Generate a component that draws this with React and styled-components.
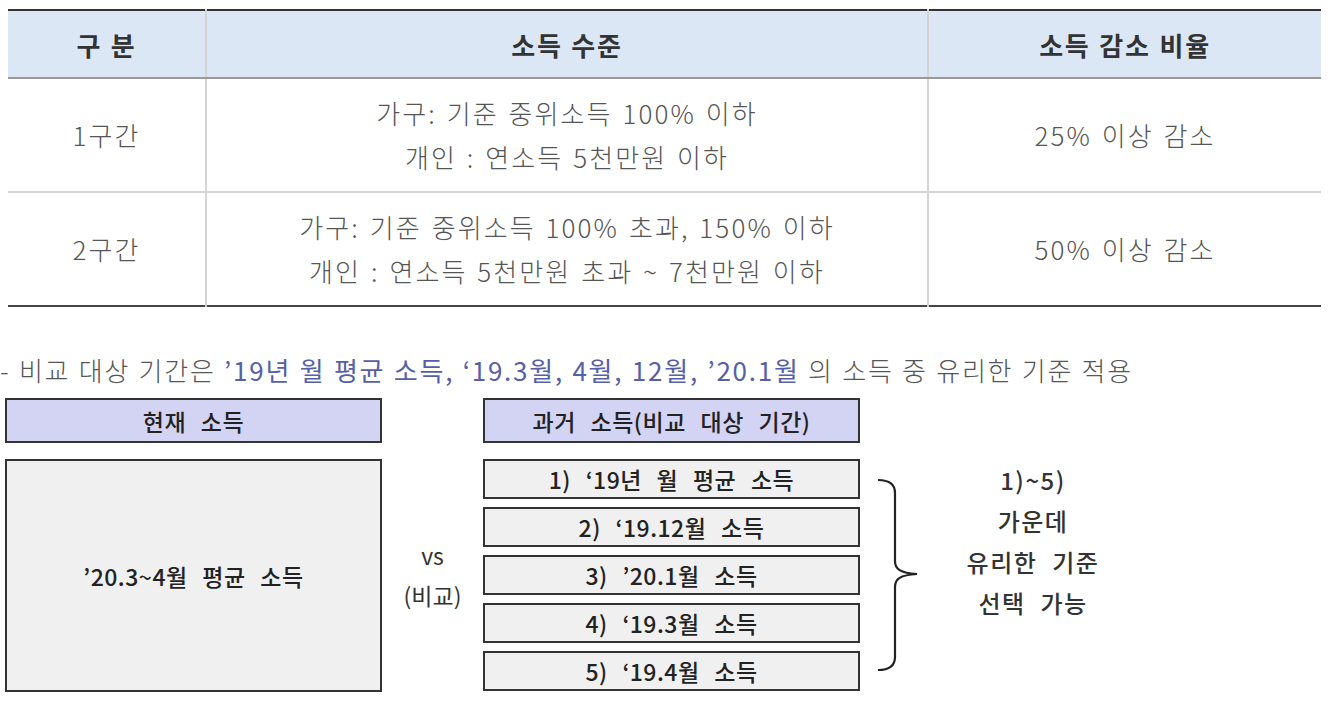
import React from 'react';
import styled, { createGlobalStyle } from 'styled-components';

const GlobalStyle = createGlobalStyle`
  body {
    margin: 0;
    background: #fff;
    font-family: "Noto Sans CJK KR", "Noto Sans", sans-serif;
  }
`;

const Page = styled.div`
  width: 1335px;
  height: 707px;
  overflow: hidden;
  padding-top: 9px;
  box-sizing: border-box;
`;

const Table = styled.table`
  margin-left: 8px;
  width: 1313px;
  border-collapse: collapse;
  table-layout: fixed;
  border-top: 2px solid #333;
  border-bottom: 2px solid #444;
`;

const HeadCell = styled.th`
  height: 66px;
  padding: 0;
  background: #dce7f5;
  color: #333;
  font-size: 26px;
  font-weight: 700;
  letter-spacing: 1.8px;
  word-spacing: 1px;
  border-bottom: 2px solid #9a9a9a;
  border-left: ${(p) => (p.first ? 'none' : '2px solid #d4d4d4')};
`;

const BodyCell = styled.td`
  height: 112px;
  padding: 0;
  text-align: center;
  color: #555;
  font-size: 26px;
  font-weight: 300;
  line-height: 44px;
  letter-spacing: 2.1px;
  word-spacing: 2px;
  border-left: ${(p) => (p.first ? 'none' : '2px solid #d4d4d4')};
  border-top: ${(p) => (p.divided ? '2px solid #d4d4d4' : 'none')};
`;

const Note = styled.p`
  margin: 46px 0 0 0;
  height: 34px;
  font-size: 26px;
  line-height: 34px;
  color: #555;
  font-weight: 300;
  white-space: nowrap;
  letter-spacing: 1.75px;
  word-spacing: 1px;
`;

const Accent = styled.span`
  color: #5660a6;
  font-weight: 400;
`;

const Diagram = styled.div`
  display: flex;
  align-items: flex-start;
  margin-top: 11px;
  padding-left: 5px;
  color: #222;
  font-size: 23px;
  font-weight: 500;
`;

const Column = styled.div`
  display: flex;
  flex-direction: column;
  gap: 16px;
  width: 377px;
`;

const Box = styled.div`
  box-sizing: border-box;
  height: ${(p) => p.h}px;
  display: flex;
  align-items: center;
  justify-content: center;
  border: 2px solid #333;
  background: ${(p) => (p.title ? '#d3d3f3' : '#f0f0f0')};
  letter-spacing: 0.5px;
  word-spacing: 9px;
  white-space: nowrap;
`;

const List = styled.div`
  display: flex;
  flex-direction: column;
  gap: 8px;
`;

const Versus = styled.div`
  width: 101px;
  height: 232px;
  margin-top: 61px;
  display: flex;
  flex-direction: column;
  align-items: center;
  justify-content: center;
  gap: 4px;
  font-size: 23px;
  line-height: 36px;
  color: #333;
  font-weight: 400;
`;

const Side = styled.div`
  display: flex;
  align-items: center;
  height: 232px;
  margin-top: 61px;
`;

const Brace = styled.svg`
  margin-left: 16px;
  display: block;
`;

const Summary = styled.div`
  width: 226px;
  margin-top: -68px;
  display: flex;
  flex-direction: column;
  align-items: center;
  font-size: 24px;
  line-height: 41px;
  color: #333;
  font-weight: 500;
  letter-spacing: 1.5px;
  word-spacing: 8px;
`;

const rows = [
  {
    name: '1구간',
    level: ['가구: 기준 중위소득 100% 이하', '개인 : 연소득 5천만원 이하'],
    rate: '25% 이상 감소',
  },
  {
    name: '2구간',
    level: ['가구: 기준 중위소득 100% 초과, 150% 이하', '개인 : 연소득 5천만원 초과 ~ 7천만원 이하'],
    rate: '50% 이상 감소',
  },
];

const periods = [
  "1) ‘19년 월 평균 소득",
  "2) ‘19.12월 소득",
  "3) ’20.1월 소득",
  "4) ‘19.3월 소득",
  "5) ‘19.4월 소득",
];

export default function App() {
  return (
    <Page>
      <GlobalStyle />
      <Table>
        <colgroup>
          <col style={{ width: 198 }} />
          <col style={{ width: 722 }} />
          <col />
        </colgroup>
        <thead>
          <tr>
            <HeadCell first>구 분</HeadCell>
            <HeadCell>소득 수준</HeadCell>
            <HeadCell>소득 감소 비율</HeadCell>
          </tr>
        </thead>
        <tbody>
          {rows.map((r, i) => (
            <tr key={r.name}>
              <BodyCell first divided={i > 0}>{r.name}</BodyCell>
              <BodyCell divided={i > 0}>
                {r.level[0]}
                <br />
                {r.level[1]}
              </BodyCell>
              <BodyCell divided={i > 0}>{r.rate}</BodyCell>
            </tr>
          ))}
        </tbody>
      </Table>

      <Note>
        - 비교 대상 기간은 <Accent>’19년 월 평균 소득, ‘19.3월, 4월, 12월, ’20.1월</Accent> 의 소득 중 유리한 기준 적용
      </Note>

      <Diagram>
        <Column>
          <Box title="1" h={45}>현재 소득</Box>
          <Box h={233}>’20.3~4월 평균 소득</Box>
        </Column>
        <Versus>
          <span>vs</span>
          <span>(비교)</span>
        </Versus>
        <Column>
          <Box title="1" h={45}>과거 소득(비교 대상 기간)</Box>
          <List>
            {periods.map((p) => (
              <Box key={p} h={40}>{p}</Box>
            ))}
          </List>
        </Column>
        <Side>
          <Brace width="44" height="196" viewBox="0 0 44 196">
            <path
              d="M2 3 C12 3 19 6 19 16 L19 84 C19 92 24 96 41 97 C24 98 19 102 19 110 L19 180 C19 190 12 193 2 193"
              fill="none"
              stroke="#222"
              strokeWidth="2.2"
            />
          </Brace>
          <Summary>
            <span>1)~5)</span>
            <span>가운데</span>
            <span>유리한 기준</span>
            <span>선택 가능</span>
          </Summary>
        </Side>
      </Diagram>
    </Page>
  );
}
